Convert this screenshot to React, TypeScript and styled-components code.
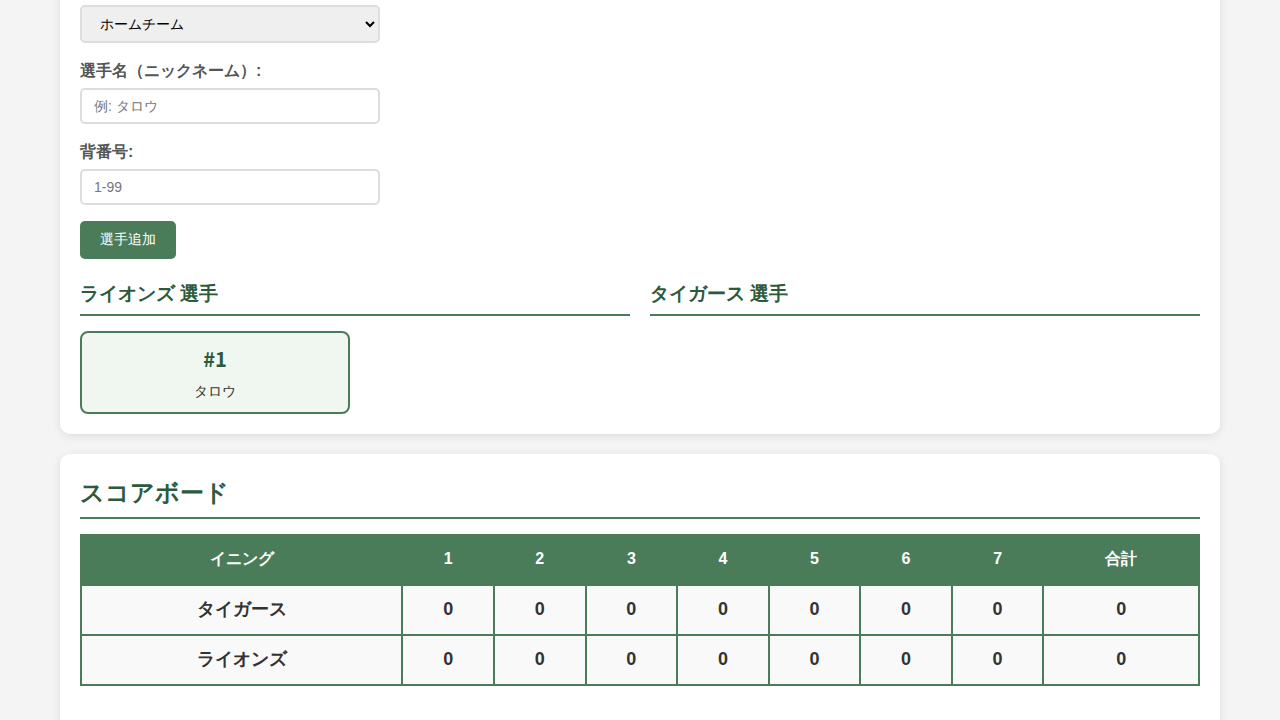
import React from "react";
import styled, { createGlobalStyle } from "styled-components";

const GREEN = "#4a7c59";
const DARK = "#2d5a3d";
const FONT = `"Liberation Sans", Arial, sans-serif`;

const Global = createGlobalStyle`
  html, body { margin: 0; padding: 0; }
  body {
    background: #f4f4f4;
    font-family: ${FONT};
    color: #333;
    overflow: hidden;
  }
  * { box-sizing: border-box; }
`;

const Container = styled.div`
  width: 1160px;
  margin: 0 auto;
  display: flex;
  flex-direction: column;
  gap: 20px;
`;

const Card = styled.section<{ $cut?: boolean; $extra?: boolean }>`
  background: #fff;
  border-radius: 10px;
  box-shadow: 0 2px 10px rgba(0, 0, 0, 0.1);
  padding: 20px 20px ${(p) => (p.$extra ? "60px" : "20px")};
  margin-top: ${(p) => (p.$cut ? "-15px" : "0")};
`;

const Group = styled.div`
  margin-bottom: 18px;
`;

const Label = styled.label`
  display: block;
  font-size: 16px;
  line-height: 19px;
  font-weight: bold;
  color: #555;
  margin-bottom: 8px;
`;

const Select = styled.select`
  display: block;
  width: 300px;
  height: 38px;
  padding: 0 10px 0 14px;
  border: 2px solid #ddd;
  border-radius: 5px;
  background: #efefef;
  color: #000;
  font-family: ${FONT};
  font-size: 14px;
`;

const Input = styled.input`
  display: block;
  width: 300px;
  height: 36px;
  padding: 0 12px;
  border: 2px solid #ddd;
  border-radius: 5px;
  background: #fff;
  font-family: ${FONT};
  font-size: 14px;
  &::placeholder { color: #777; }
`;

const Button = styled.button`
  display: block;
  margin-top: -2px;
  height: 38px;
  padding: 0 20px;
  border: none;
  border-radius: 5px;
  background: ${GREEN};
  color: #fff;
  font-family: ${FONT};
  font-size: 14px;
`;

const Teams = styled.div`
  display: grid;
  grid-template-columns: 1fr 1fr;
  gap: 20px;
  margin-top: 20px;
`;

const TeamTitle = styled.h3`
  margin: 0 0 15px;
  font-size: 19.2px;
  line-height: 29px;
  padding-bottom: 6px;
  color: ${DARK};
  border-bottom: 2px solid ${GREEN};
`;

const PlayerGrid = styled.div`
  display: grid;
  grid-template-columns: repeat(2, 1fr);
  gap: 10px;
`;

const PlayerCard = styled.div`
  border: 2px solid ${GREEN};
  border-radius: 8px;
  background: #f0f7f0;
  padding: 13px 15px 11px;
  text-align: center;
  height: 83px;
`;

const PlayerNumber = styled.div`
  font-family: "Noto Sans CJK JP", sans-serif;
  font-size: 20px;
  line-height: 26px;
  font-weight: bold;
  color: ${DARK};
  margin-bottom: 9px;
`;

const PlayerName = styled.div`
  font-size: 14px;
  line-height: 20px;
  color: #333;
`;

const Title = styled.h2`
  margin: 0 0 15px;
  font-size: 24.4px;
  line-height: 38px;
  padding-bottom: 5px;
  color: ${DARK};
  border-bottom: 2px solid ${GREEN};
`;

const Table = styled.table`
  width: 100%;
  border-collapse: collapse;
  table-layout: fixed;
`;

const Col = styled.col<{ $w: string }>`
  width: ${(p) => p.$w};
`;

const Th = styled.th`
  background: ${GREEN};
  color: #fff;
  font-size: 16px;
  font-weight: bold;
  height: 50px;
  padding: 0 0 2px;
  border: 2px solid ${GREEN};
  text-align: center;
`;

const Td = styled.td`
  background: #f9f9f9;
  color: #333;
  font-size: 18px;
  font-weight: bold;
  height: 50px;
  padding: 0 0 2px;
  border: 2px solid ${GREEN};
  text-align: center;
`;

const innings = [1, 2, 3, 4, 5, 6, 7];
const rows = ["タイガース", "ライオンズ"];

export default function App() {
  return (
    <>
      <Global />
      <Container>
        <Card $cut>
          <Group>
            <Select defaultValue="home">
              <option value="home">ホームチーム</option>
              <option value="away">アウェイチーム</option>
            </Select>
          </Group>
          <Group>
            <Label>選手名（ニックネーム）:</Label>
            <Input placeholder="例: タロウ" />
          </Group>
          <Group>
            <Label>背番号:</Label>
            <Input placeholder="1-99" />
          </Group>
          <Button>選手追加</Button>
          <Teams>
            <div>
              <TeamTitle>ライオンズ 選手</TeamTitle>
              <PlayerGrid>
                <PlayerCard>
                  <PlayerNumber>#1</PlayerNumber>
                  <PlayerName>タロウ</PlayerName>
                </PlayerCard>
              </PlayerGrid>
            </div>
            <div>
              <TeamTitle>タイガース 選手</TeamTitle>
            </div>
          </Teams>
        </Card>
        <Card $extra>
          <Title>スコアボード</Title>
          <Table>
            <colgroup>
              <Col $w="28.75%" />
              {innings.map((i) => (
                <Col key={i} $w="8.19%" />
              ))}
              <Col $w="auto" />
            </colgroup>
            <thead>
              <tr>
                <Th>イニング</Th>
                {innings.map((i) => (
                  <Th key={i}>{i}</Th>
                ))}
                <Th>合計</Th>
              </tr>
            </thead>
            <tbody>
              {rows.map((r) => (
                <tr key={r}>
                  <Td>{r}</Td>
                  {innings.map((i) => (
                    <Td key={i}>0</Td>
                  ))}
                  <Td>0</Td>
                </tr>
              ))}
            </tbody>
          </Table>
        </Card>
      </Container>
    </>
  );
}
